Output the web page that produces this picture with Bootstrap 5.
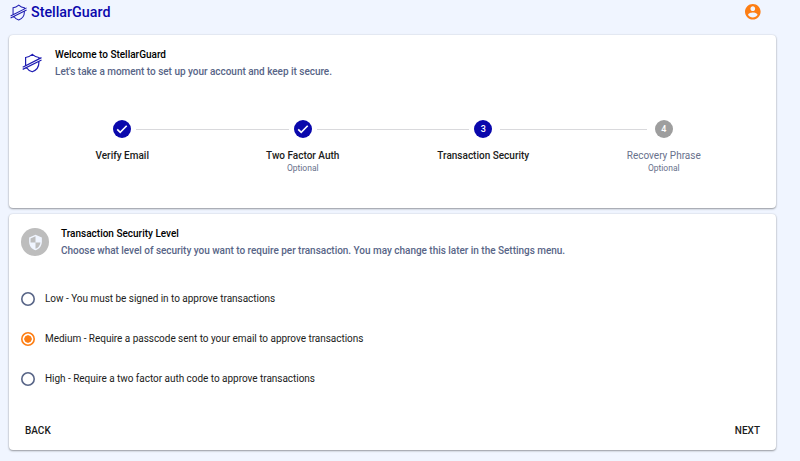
<!DOCTYPE html>
<html lang="en">
<head>
<meta charset="utf-8">
<meta name="viewport" content="width=device-width, initial-scale=1">
<title>StellarGuard</title>
<link href="https://cdn.jsdelivr.net/npm/bootstrap@5.3.0/dist/css/bootstrap.min.css" rel="stylesheet">
<style>
body{background:#f0f5ff;font-family:Roboto,sans-serif;font-size:10px;line-height:16px;color:#1b1c20;height:461px;overflow:hidden}
svg{display:block;flex:none}
.topbar{height:35px;padding:0 39px 11px 10px}
.brand{font-size:14.3px;font-weight:500;color:#0a08ac;line-height:18px;margin-left:4px}
.panel{width:767px;margin-left:9px;border:0;border-radius:4px;box-shadow:0 1px 2px rgba(0,0,0,.36),0 0 2px rgba(0,0,0,.12);color:inherit}
.panel-welcome{height:173px;margin-bottom:6px}
.panel-level{height:236px}
.head-title{font-weight:500;color:#000;line-height:17px}
.head-sub{font-weight:500;color:#586587;line-height:17px;letter-spacing:-.025px}
.stepper{margin:40px 22px 0 23px}
.step{flex:1 1 0;text-align:center}
.rule{height:1px;background:#d9d9dc;flex:1 1 0}
.gap-side{flex:1 1 0}
.to-dot{margin-right:5px}
.from-dot{margin-left:5px}
.to-last{margin-right:8px}
.from-third{margin-left:8px}
.dot{width:18px;height:18px;border-radius:50%;background:#0a08ac;color:#fff;font-size:9px;font-weight:500;line-height:18px;flex:none}
.dot-idle{background:#9e9e9e}
.step-name{font-weight:500;margin-top:10px;line-height:16px}
.step-idle{font-weight:400;color:#68718c}
.step-note{font-size:8.5px;line-height:10px;color:#68718c;margin-top:-1px}
.shield{width:28px;height:28px;background:#bdbdbd}
.choice{height:40px;margin:0;letter-spacing:-.03px}
.choice input{appearance:none;width:14px;height:14px;border:0;box-shadow:inset 0 0 0 1.6px #586587;border-radius:50%;margin:0 10px 0 0;background:#fff}
.choice input:checked{box-shadow:inset 0 0 0 1.6px #fd7e14;background:radial-gradient(circle,#fd7e14 0 3.4px,#fff 4px)}
.flat{font-size:10px;font-weight:500;line-height:16px;color:#1b1c20;padding:0;border:0}
</style>
</head>
<body>
<svg width="0" height="0" class="position-absolute"><symbol id="logo" viewBox="0 0 20 20"><g fill="none" stroke="#1d1bb2" stroke-width="1.2"><path d="M3.6 12.2V4.5C6.2 4.3 8.2 3.2 10.3 1.4c2 1.8 4 2.8 6.6 3.1v1M16.9 8.5v1c0 4.6-2.2 7.7-6.6 9.3-2.7-.9-4.6-2.3-5.7-4.1M.7 14.2 19.5 4.6M.7 16.4 19.5 7"/></g></symbol></svg>
<header class="topbar d-flex align-items-center justify-content-between">
  <div class="d-flex align-items-center"><svg width="17" height="17"><use href="#logo"/></svg><span class="brand">StellarGuard</span></div>
  <svg width="16" height="16" viewBox="2 2 20.5 20.5" fill="#fd7e14"><path d="M12 2C6.48 2 2 6.48 2 12s4.48 10 10 10 10-4.48 10-10S17.52 2 12 2zm0 3c1.66 0 3 1.34 3 3s-1.34 3-3 3-3-1.34-3-3 1.34-3 3-3zm0 14.2c-2.5 0-4.71-1.28-6-3.22.03-1.99 4-3.08 6-3.08 1.99 0 5.97 1.09 6 3.08-1.29 1.94-3.5 3.22-6 3.22z"/></svg>
</header>
<main>
  <section class="card panel panel-welcome">
    <div class="d-flex align-items-center" style="padding:11px 13px 0">
      <svg width="20" height="20"><use href="#logo"/></svg>
      <div style="margin-left:13px"><div class="head-title">Welcome to StellarGuard</div><div class="head-sub">Let's take a moment to set up your account and keep it secure.</div></div>
    </div>
    <div class="stepper d-flex">
      <div class="step">
        <div class="d-flex align-items-center"><span class="gap-side"></span><span class="dot"><svg width="18" height="18" viewBox="0 0 18 18"><path d="m4.2 9.4 3 3 6.5-6.6" fill="none" stroke="#fff" stroke-width="1.6"/></svg></span><span class="gap-side d-flex"><span class="rule from-dot"></span></span></div>
        <div class="step-name">Verify Email</div>
      </div>
      <div class="step">
        <div class="d-flex align-items-center"><span class="gap-side d-flex"><span class="rule to-dot"></span></span><span class="dot"><svg width="18" height="18" viewBox="0 0 18 18"><path d="m4.2 9.4 3 3 6.5-6.6" fill="none" stroke="#fff" stroke-width="1.6"/></svg></span><span class="gap-side d-flex"><span class="rule from-dot"></span></span></div>
        <div class="step-name">Two Factor Auth</div><div class="step-note">Optional</div>
      </div>
      <div class="step">
        <div class="d-flex align-items-center"><span class="gap-side d-flex"><span class="rule to-dot"></span></span><span class="dot">3</span><span class="gap-side d-flex"><span class="rule from-third"></span></span></div>
        <div class="step-name">Transaction Security</div>
      </div>
      <div class="step">
        <div class="d-flex align-items-center"><span class="gap-side d-flex"><span class="rule to-last"></span></span><span class="dot dot-idle">4</span><span class="gap-side"></span></div>
        <div class="step-name step-idle">Recovery Phrase</div><div class="step-note">Optional</div>
      </div>
    </div>
  </section>
  <section class="card panel panel-level">
    <div class="d-flex align-items-center" style="padding:11px 12px 0">
      <span class="shield rounded-circle d-flex align-items-center justify-content-center"><svg width="17" height="17" viewBox="0 0 24 24" fill="#f0f5ff"><path d="M12 1 3 5v6c0 5.55 3.84 10.74 9 12 5.16-1.26 9-6.45 9-12V5l-9-4zm0 10.99h7c-.53 4.12-3.28 7.79-7 8.94V12H5V6.3l7-3.11v8.8z"/></svg></span>
      <div style="margin-left:12px"><div class="head-title">Transaction Security Level</div><div class="head-sub">Choose what level of security you want to require per transaction. You may change this later in the Settings menu.</div></div>
    </div>
    <form style="padding:20px 12px 0">
      <label class="choice d-flex align-items-center"><input type="radio" name="level"><span>Low - You must be signed in to approve transactions</span></label>
      <label class="choice d-flex align-items-center"><input type="radio" name="level" checked><span>Medium - Require a passcode sent to your email to approve transactions</span></label>
      <label class="choice d-flex align-items-center"><input type="radio" name="level"><span>High - Require a two factor auth code to approve transactions</span></label>
    </form>
    <div class="d-flex justify-content-between mt-auto" style="padding:0 16px 11px"><button class="btn flat">BACK</button><button class="btn flat">NEXT</button></div>
  </section>
</main>
<script src="https://cdn.jsdelivr.net/npm/bootstrap@5.3.0/dist/js/bootstrap.bundle.min.js"></script>
</body>
</html>
